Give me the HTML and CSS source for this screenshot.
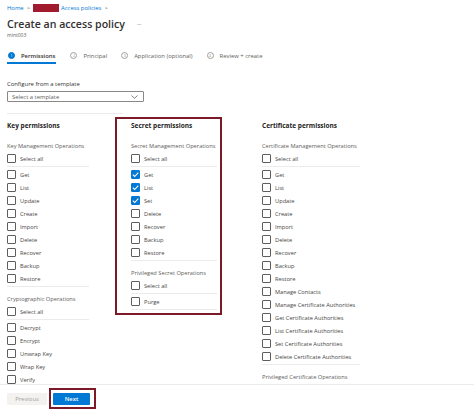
FILE: index.html
```html
<!DOCTYPE html>
<html lang="en">
<head>
    <meta charset="UTF-8">
    <meta name="viewport" content="width=device-width, initial-scale=1.0">
    <title>Create an access policy</title>
    <link rel="stylesheet" href="styles.css">
</head>
<body>
    <div class="main">
        <div class="breadcrumb">
            <span class="crumb">Home</span><span class="sep">&gt;</span>
            <span class="redacted"></span>
            <span class="crumb">Access policies</span><span class="sep">&gt;</span>
        </div>

        <div class="title-row">
            <h1>Create an access policy</h1>
            <span class="more">···</span>
        </div>
        <div class="subtitle">mint003</div>

        <div class="tabs">
            <div class="tab active"><span class="step">1</span>Permissions</div>
            <div class="tab"><span class="step">2</span>Principal</div>
            <div class="tab"><span class="step">3</span>Application (optional)</div>
            <div class="tab"><span class="step">4</span>Review + create</div>
        </div>

        <div class="field-label">Configure from a template</div>
        <div class="select">
            <span>Select a template</span>
            <svg width="7" height="4" viewBox="0 0 7 4"><path d="M0.5 0.5 L3.5 3.3 L6.5 0.5" fill="none" stroke="#605e5c" stroke-width="0.8"/></svg>
        </div>

        <div class="divider"></div>

        <div class="columns">
            <!-- Key -->
            <div class="col col-key">
                <div class="col-head">Key permissions</div>
                <div class="group-label">Key Management Operations</div>
                <div class="select-all"><label class="row"><span class="box"></span>Select all</label></div>
                <div class="items">
                    <label class="row"><span class="box"></span>Get</label>
                    <label class="row"><span class="box"></span>List</label>
                    <label class="row"><span class="box"></span>Update</label>
                    <label class="row"><span class="box"></span>Create</label>
                    <label class="row"><span class="box"></span>Import</label>
                    <label class="row"><span class="box"></span>Delete</label>
                    <label class="row"><span class="box"></span>Recover</label>
                    <label class="row"><span class="box"></span>Backup</label>
                    <label class="row"><span class="box"></span>Restore</label>
                </div>
                <div class="group-label">Cryptographic Operations</div>
                <div class="select-all"><label class="row"><span class="box"></span>Select all</label></div>
                <div class="items">
                    <label class="row"><span class="box"></span>Decrypt</label>
                    <label class="row"><span class="box"></span>Encrypt</label>
                    <label class="row"><span class="box"></span>Unwrap Key</label>
                    <label class="row"><span class="box"></span>Wrap Key</label>
                    <label class="row"><span class="box"></span>Verify</label>
                </div>
            </div>

            <!-- Secret -->
            <div class="col col-secret">
                <div class="col-head">Secret permissions</div>
                <div class="group-label">Secret Management Operations</div>
                <div class="select-all"><label class="row"><span class="box"></span>Select all</label></div>
                <div class="items">
                    <label class="row"><span class="box checked"><svg viewBox="0 0 9 9"><path d="M1.8 4.6 L3.7 6.5 L7.3 2.6" fill="none" stroke="#fff" stroke-width="1.1"/></svg></span>Get</label>
                    <label class="row"><span class="box checked"><svg viewBox="0 0 9 9"><path d="M1.8 4.6 L3.7 6.5 L7.3 2.6" fill="none" stroke="#fff" stroke-width="1.1"/></svg></span>List</label>
                    <label class="row"><span class="box checked"><svg viewBox="0 0 9 9"><path d="M1.8 4.6 L3.7 6.5 L7.3 2.6" fill="none" stroke="#fff" stroke-width="1.1"/></svg></span>Set</label>
                    <label class="row"><span class="box"></span>Delete</label>
                    <label class="row"><span class="box"></span>Recover</label>
                    <label class="row"><span class="box"></span>Backup</label>
                    <label class="row"><span class="box"></span>Restore</label>
                </div>
                <div class="group-label">Privileged Secret Operations</div>
                <div class="select-all"><label class="row"><span class="box"></span>Select all</label></div>
                <div class="items">
                    <label class="row"><span class="box"></span>Purge</label>
                </div>
            </div>

            <!-- Certificate -->
            <div class="col col-cert">
                <div class="col-head">Certificate permissions</div>
                <div class="group-label">Certificate Management Operations</div>
                <div class="select-all"><label class="row"><span class="box"></span>Select all</label></div>
                <div class="items">
                    <label class="row"><span class="box"></span>Get</label>
                    <label class="row"><span class="box"></span>List</label>
                    <label class="row"><span class="box"></span>Update</label>
                    <label class="row"><span class="box"></span>Create</label>
                    <label class="row"><span class="box"></span>Import</label>
                    <label class="row"><span class="box"></span>Delete</label>
                    <label class="row"><span class="box"></span>Recover</label>
                    <label class="row"><span class="box"></span>Backup</label>
                    <label class="row"><span class="box"></span>Restore</label>
                    <label class="row"><span class="box"></span>Manage Contacts</label>
                    <label class="row"><span class="box"></span>Manage Certificate Authorities</label>
                    <label class="row"><span class="box"></span>Get Certificate Authorities</label>
                    <label class="row"><span class="box"></span>List Certificate Authorities</label>
                    <label class="row"><span class="box"></span>Set Certificate Authorities</label>
                    <label class="row"><span class="box"></span>Delete Certificate Authorities</label>
                </div>
                <div class="group-label">Privileged Certificate Operations</div>
            </div>

            <!-- annotation around secret permissions -->
            <div class="highlight highlight-secret"></div>
        </div>
    </div>

    <div class="footer">
        <button class="btn btn-prev" disabled>Previous</button>
        <button class="btn btn-next">Next</button>
        <div class="highlight highlight-next"></div>
    </div>
</body>
</html>
```

FILE: styles.css
```css
body {
    margin: 0;
    font-family: 'Open Sans', 'Noto Sans', sans-serif;
    color: #323130;
    background: #fff;
    overflow: hidden;
}
.main {
    height: 384px;
    overflow: hidden;
    padding: 0 7px;
    box-sizing: border-box;
}

/* Header */
.breadcrumb {
    padding-top: 3px;
    height: 10px;
    line-height: 10px;
    font-size: 5.9px;
    color: #0078d4;
    display: flex;
    align-items: center;
}
.breadcrumb .sep {
    margin: 0 3px 0 3px;
    color: #605e5c;
}
.redacted {
    display: inline-block;
    width: 26px;
    height: 8px;
    background: #a11a2e;
    margin-right: 2px;
}
.title-row {
    margin-top: 3px;
    height: 16px;
    display: flex;
    align-items: center;
}
h1 {
    margin: 0;
    font-size: 10.6px;
    font-weight: 600;
    line-height: 16px;
    color: #323130;
}
.more {
    margin-left: 12px;
    font-size: 7px;
    color: #8a8886;
    letter-spacing: -0.5px;
}
.subtitle {
    font-size: 5px;
    line-height: 6px;
    color: #605e5c;
}

/* Steps */
.tabs {
    margin-top: 11px;
    display: flex;
    gap: 13px;
}
.tab {
    height: 13px;
    border-bottom: 2px solid transparent;
    display: flex;
    align-items: center;
    font-size: 5.9px;
    color: #605e5c;
}
.tab.active {
    border-bottom-color: #0078d4;
    color: #323130;
    font-weight: 600;
    padding-right: 1px;
}
.step {
    width: 5px;
    height: 5px;
    border: 1px solid #a19f9d;
    border-radius: 50%;
    margin: 0 6px 0 1px;
    font-size: 3.5px;
    line-height: 5px;
    text-align: center;
    color: #8a8886;
    font-weight: 400;
}
.tab.active .step {
    background: #0078d4;
    border-color: #0078d4;
    color: #fff;
}

/* Template */
.field-label {
    margin-top: 16px;
    font-size: 5.9px;
    line-height: 9px;
    color: #323130;
}
.select {
    margin-top: 2px;
    width: 137px;
    height: 11px;
    box-sizing: border-box;
    border: 1px solid #8a8886;
    border-radius: 1px;
    display: flex;
    align-items: center;
    justify-content: space-between;
    padding: 0 5px 0 4px;
    font-size: 5.9px;
    color: #605e5c;
}
.divider {
    margin-top: 11px;
    width: 116px;
    height: 1px;
    background: #edebe9;
}

/* Permission columns */
.columns {
    position: relative;
    padding-top: 5px;
    display: grid;
    grid-template-columns: 124px 131px auto;
    align-items: start;
}
.col-key { width: 82px; }
.col-secret { width: 86px; }
.col-cert { width: 98px; }
.col-head {
    height: 14px;
    line-height: 14px;
    font-size: 6.5px;
    font-weight: 700;
    color: #252423;
}
.group-label {
    margin-top: 6px;
    height: 12px;
    line-height: 12px;
    font-size: 5.7px;
    color: #605e5c;
    white-space: nowrap;
}
.col-head + .group-label {
    margin-top: 7px;
}
.row {
    height: 13px;
    display: flex;
    align-items: center;
    font-size: 5.7px;
    color: #484644;
    white-space: nowrap;
}
.box {
    width: 9px;
    height: 9px;
    box-sizing: border-box;
    border: 1px solid #605e5c;
    border-radius: 1px;
    margin-right: 4px;
    flex-shrink: 0;
    display: flex;
}
.box.checked {
    background: #0078d4;
    border-color: #0078d4;
}
.box svg {
    width: 9px;
    height: 9px;
    margin: -1px;
}
.select-all {
    padding-bottom: 1px;
    border-bottom: 1px solid #edebe9;
    margin-bottom: 1px;
}
.items {
    padding-bottom: 1px;
    border-bottom: 1px solid #edebe9;
}

/* Red annotation frames */
.highlight {
    position: absolute;
    border: 2px solid #7d1a2a;
    box-sizing: border-box;
    pointer-events: none;
}
.highlight-secret {
    left: 108px;
    top: 3px;
    width: 107px;
    height: 198px;
}

/* Footer */
.footer {
    position: relative;
    height: 28px;
    border-top: 1px solid #edebe9;
    box-sizing: border-box;
    padding: 8px 7px 0;
    display: flex;
    gap: 6px;
    align-items: flex-start;
}
.btn {
    height: 12px;
    border: none;
    border-radius: 1px;
    padding: 0;
    font-family: inherit;
    font-size: 5.9px;
    line-height: 12px;
}
.btn-prev {
    width: 40px;
    background: #f3f2f1;
    color: #a19f9d;
}
.btn-next {
    width: 37px;
    background: #0078d4;
    color: #fff;
    font-weight: 600;
}
.highlight-next {
    left: 49px;
    top: 3px;
    width: 47px;
    height: 21px;
}
```
